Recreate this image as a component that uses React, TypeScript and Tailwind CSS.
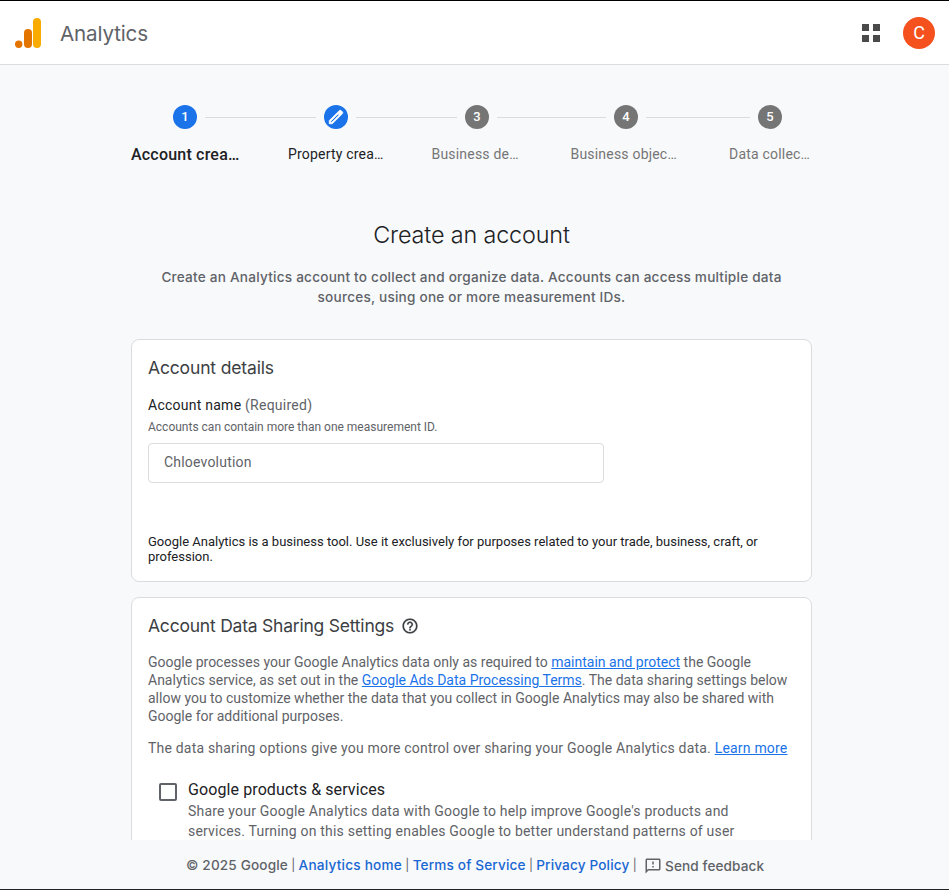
import React from "react";

const display = "font-['Google_Sans','Product_Sans',Inter,sans-serif]";

const steps = [
  { n: "1", label: "Account crea…", circle: "bg-[#1a73e8]", text: "mt-0.5 ml-[131px] w-[109px] text-base font-medium tracking-[0.2px] text-[#202124]", line: "w-[111px]" },
  { n: "2", label: "Property crea…", circle: "bg-[#1a73e8]", text: "ml-12 w-24 text-sm tracking-[0.2px] text-[#202124]", line: "w-[101px]" },
  { n: "3", label: "Business de…", circle: "bg-[#757575]", text: "ml-[47.5px] w-[88px] text-sm tracking-[0.2px] text-[#757575]", line: "w-[109px]" },
  { n: "4", label: "Business objec…", circle: "bg-[#757575]", text: "ml-[51px] w-[107px] text-sm tracking-[0.2px] text-[#757575]", line: "w-[104px]" },
  { n: "5", label: "Data collec…", circle: "bg-[#757575]", text: "ml-[51.5px] w-[82px] text-sm tracking-[0.2px] text-[#757575]", line: "" },
];

function Logo() {
  return (
    <svg width="28" height="32" viewBox="0 0 28 32" className="shrink-0">
      <rect x="19" y="1" width="8" height="30" rx="4" fill="#f9ab00" />
      <rect x="10" y="12" width="8" height="19" rx="4" fill="#e37400" />
      <circle cx="4.7" cy="27.3" r="3.7" fill="#e37400" />
    </svg>
  );
}

function Header() {
  return (
    <header className="flex h-[65px] shrink-0 items-center border-t border-b border-t-black border-b-[#dadce0] bg-white px-3.5 pt-px">
      <Logo />
      <h1 className={`mt-0.5 ml-[18px] text-[20.6px] tracking-[-0.15px] text-[#5f6368] ${display}`}>Analytics</h1>
      <div className="ml-auto grid grid-cols-2 gap-1">
        <span className="size-[7px] bg-[#4a4a4a]" />
        <span className="size-[7px] bg-[#4a4a4a]" />
        <span className="size-[7px] bg-[#4a4a4a]" />
        <span className="size-[7px] bg-[#4a4a4a]" />
      </div>
      <div className="ml-[23px] flex size-8 items-center justify-center rounded-full bg-[#f4511e] text-lg text-white">C</div>
    </header>
  );
}

function Stepper() {
  return (
    <nav>
      <div className="flex items-center pl-[173px] pt-10">
        {steps.map((s) => (
          <React.Fragment key={s.n}>
            <div className={`flex size-6 shrink-0 items-center justify-center rounded-full text-[13px] font-medium text-white ${s.circle}`}>
              {s.n === "2" ? (
                <svg width="18" height="18" viewBox="0 0 24 24" fill="#fff" stroke="#fff" strokeLinejoin="round">
                  <path d="M20.41 4.94l-1.35-1.35c-.78-.78-2.05-.78-2.83 0L3 16.82V21h4.18L20.41 7.77c.79-.78.79-2.05 0-2.83zm-14 14.12L5 19v-1.36l9.82-9.82 1.41 1.41-9.82 9.83z" />
                </svg>
              ) : (
                s.n
              )}
            </div>
            {s.line && <div className={`mx-2 mt-px h-px shrink-0 bg-[#dadce0] ${s.line}`} />}
          </React.Fragment>
        ))}
      </div>
      <div className="mt-[13px] flex h-6 items-center">
        {steps.map((s) => (
          <div key={s.n} className={`shrink-0 whitespace-nowrap ${s.text}`}>{s.label}</div>
        ))}
      </div>
    </nav>
  );
}

function Link({ children }: { children: React.ReactNode }) {
  return <a className="text-[#1a73e8] underline">{children}</a>;
}

function Bar() {
  return <span className="w-[10.6px] text-center text-xs font-normal tracking-normal">|</span>;
}

export default function App() {
  return (
    <div className="flex h-[890px] w-[949px] flex-col overflow-hidden bg-[#f8f9fb] font-[Roboto,sans-serif]">
      <Header />
      <main className="min-h-0 flex-1 overflow-hidden">
        <Stepper />
        <div className="ml-[131px] w-[681px]">
          <section className={`pt-[53px] text-center ${display}`}>
            <h2 className="text-[23.4px] leading-8 font-[350] tracking-[-0.15px] text-[#202124]">Create an account</h2>
            <p className="mt-4 text-[13.6px] leading-5 font-medium tracking-[0.22px] whitespace-nowrap text-[#5f6368]">
              Create an Analytics account to collect and organize data. Accounts can access multiple data
              <br />
              sources, using one or more measurement IDs.
            </p>
          </section>

          <section className="mt-8 h-[243px] rounded-lg border border-[#dadce0] bg-white px-4 pt-4">
            <h3 className={`text-[17.5px] leading-6 font-[370] tracking-[-0.15px] text-[#3c4043] ${display}`}>Account details</h3>
            <label className="mt-[15px] block text-sm leading-5 tracking-[0.25px] text-[#202124]">
              Account name <span className="text-[#5f6368]">(Required)</span>
            </label>
            <p className="mt-1 text-xs leading-4 text-[#5f6368]">Accounts can contain more than one measurement ID.</p>
            <div className="mt-2 flex h-10 w-[456px] items-center rounded border border-[#dadce0] px-[15px] pb-0.5 text-sm tracking-[0.2px] text-[#5f6368]">
              Chloevolution
            </div>
            <p className="mt-[51px] text-[13px] leading-[15px] whitespace-nowrap text-[#202124]">
              Google Analytics is a business tool. Use it exclusively for purposes related to your trade, business, craft, or
              <br />
              profession.
            </p>
          </section>

          <section className="mt-[15px] h-[400px] rounded-lg border border-[#dadce0] bg-white px-4 pt-4">
            <div className="flex items-center">
              <h3 className={`w-[245px] text-[17.5px] leading-6 font-[370] tracking-[-0.22px] whitespace-nowrap text-[#3c4043] ${display}`}>Account Data Sharing Settings</h3>
              <svg className="ml-[7.5px]" width="18" height="18" viewBox="0 0 24 24" fill="#3c4043" stroke="#3c4043" strokeWidth="0.25">
                <path d="M11 18h2v-2h-2v2zm1-16C6.48 2 2 6.48 2 12s4.48 10 10 10 10-4.48 10-10S17.52 2 12 2zm0 18c-4.41 0-8-3.59-8-8s3.59-8 8-8 8 3.59 8 8-3.59 8-8 8zm0-14c-2.21 0-4 1.79-4 4h2c0-1.1.9-2 2-2s2 .9 2 2c0 2-3 1.75-3 5h2c0-2.25 3-2.5 3-5 0-2.21-1.79-4-4-4z" />
              </svg>
            </div>
            <p className="mt-[15px] text-sm leading-[18px] whitespace-nowrap text-[#5f6368]">
              Google processes your Google Analytics data only as required to <Link>maintain and protect</Link> the Google
              <br />
              Analytics service, as set out in the <Link>Google Ads Data Processing Terms</Link>. The data sharing settings below
              <br />
              allow you to customize whether the data that you collect in Google Analytics may also be shared with
              <br />
              Google for additional purposes.
            </p>
            <p className="mt-3.5 text-sm leading-[18px] tracking-[0.2px] whitespace-nowrap text-[#5f6368]">
              The data sharing options give you more control over sharing your Google Analytics data. <Link>Learn more</Link>
            </p>
            <div className="mt-[21px] flex">
              <div className="mt-[5px] ml-[11px] size-[18px] shrink-0 rounded-[2px] border-2 border-[#5f6368]" />
              <div className="ml-[11px] whitespace-nowrap">
                <div className="text-base leading-6 tracking-[0.1px] text-[#202124]">Google products &amp; services</div>
                <p className="-mt-px text-sm leading-5 tracking-[0.2px] text-[#5f6368]">
                  Share your Google Analytics data with Google to help improve Google's products and
                  <br />
                  services. Turning on this setting enables Google to better understand patterns of user
                </p>
              </div>
            </div>
          </section>
        </div>
      </main>
      <footer className={`flex h-[50px] shrink-0 items-center border-b border-[#202124] pt-px pl-[186px] text-[13.6px] font-medium tracking-[0.15px] whitespace-nowrap text-[#5f6368] ${display}`}>
        <span>© 2025 Google</span>
        <Bar />
        <a className="tracking-[0.22px] text-[#1967d2]">Analytics home</a>
        <Bar />
        <a className="text-[#1967d2]">Terms of Service</a>
        <Bar />
        <a className="text-[#1967d2]">Privacy Policy</a>
        <Bar />
        <svg className="mt-0.5 ml-[4px] mr-[3px]" width="18" height="18" viewBox="0 0 24 24" fill="#5f6368">
          <path d="M20 2H4c-1.1 0-1.99.9-1.99 2L2 22l4-4h14c1.1 0 2-.9 2-2V4c0-1.1-.9-2-2-2zm0 14H5.17L4 17.17V4h16v12zm-9-4h2v2h-2zm0-6h2v4h-2z" />
        </svg>
        <span className="mt-0.5 tracking-[0.1px]">Send feedback</span>
      </footer>
    </div>
  );
}
